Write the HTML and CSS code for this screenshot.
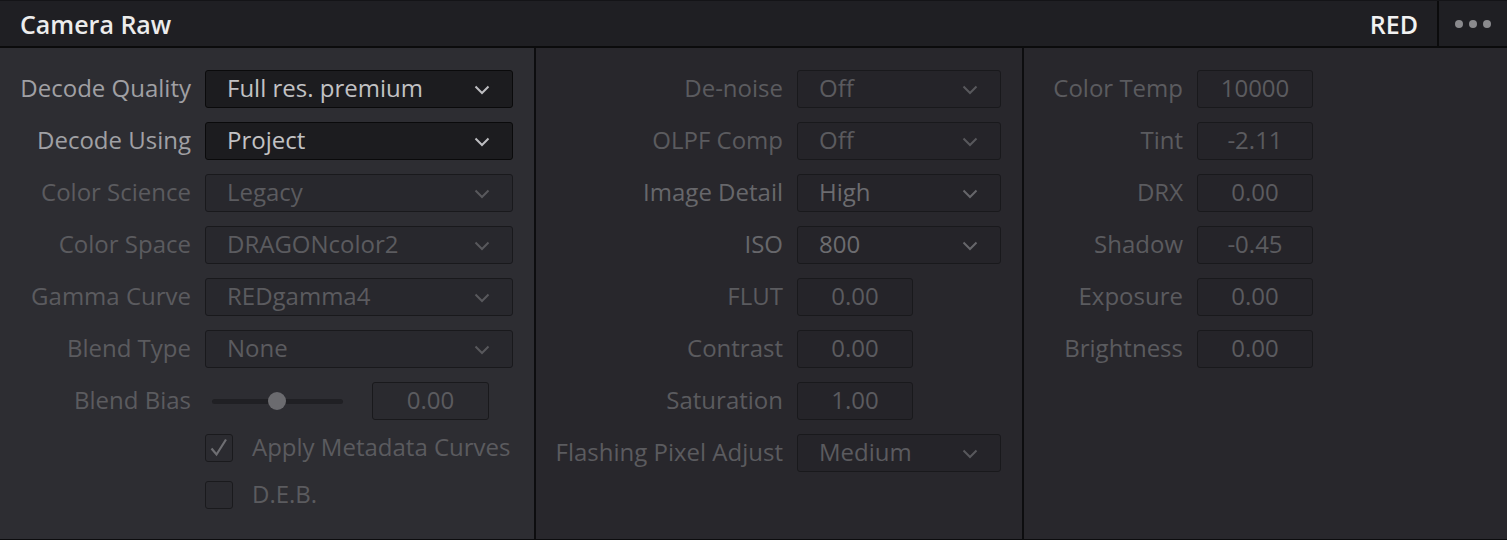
FILE: index.html
```html
<!DOCTYPE html>
<html>
<head>
<meta charset="utf-8">
<link rel="stylesheet" href="styles.css">
</head>
<body>
<div class="panel">
  <header class="header">
    <div class="title">Camera Raw</div>
    <div class="brand">RED</div>
    <div class="more"><span></span><span></span><span></span></div>
  </header>
  <div class="cols">
    <section class="col col-left">
      <div class="grid">
        <div class="lbl on">Decode Quality</div>
        <div class="dd active"><span>Full res. premium</span><svg class="chev" viewBox="0 0 16 10"><path d="M1.5 1.5 L8 8 L14.5 1.5"/></svg></div>
        <div class="lbl on">Decode Using</div>
        <div class="dd active"><span>Project</span><svg class="chev" viewBox="0 0 16 10"><path d="M1.5 1.5 L8 8 L14.5 1.5"/></svg></div>
        <div class="lbl">Color Science</div>
        <div class="dd"><span>Legacy</span><svg class="chev" viewBox="0 0 16 10"><path d="M1.5 1.5 L8 8 L14.5 1.5"/></svg></div>
        <div class="lbl">Color Space</div>
        <div class="dd"><span>DRAGONcolor2</span><svg class="chev" viewBox="0 0 16 10"><path d="M1.5 1.5 L8 8 L14.5 1.5"/></svg></div>
        <div class="lbl">Gamma Curve</div>
        <div class="dd"><span>REDgamma4</span><svg class="chev" viewBox="0 0 16 10"><path d="M1.5 1.5 L8 8 L14.5 1.5"/></svg></div>
        <div class="lbl">Blend Type</div>
        <div class="dd"><span>None</span><svg class="chev" viewBox="0 0 16 10"><path d="M1.5 1.5 L8 8 L14.5 1.5"/></svg></div>
        <div class="lbl">Blend Bias</div>
        <div class="slider-row">
          <div class="slider"><div class="track"></div><div class="thumb"></div></div>
          <div class="num">0.00</div>
        </div>
      </div>
      <div class="checks">
        <label class="chk"><span class="box"><svg viewBox="0 0 26 26"><path d="M5.5 13.5 L10.5 19.5 L20 4.5"/></svg></span><span class="chk-text">Apply Metadata Curves</span></label>
        <label class="chk chk2"><span class="box"></span><span class="chk-text">D.E.B.</span></label>
      </div>
    </section>
    <section class="col col-mid">
      <div class="grid">
        <div class="lbl">De-noise</div>
        <div class="dd"><span>Off</span><svg class="chev" viewBox="0 0 16 10"><path d="M1.5 1.5 L8 8 L14.5 1.5"/></svg></div>
        <div class="lbl">OLPF Comp</div>
        <div class="dd"><span>Off</span><svg class="chev" viewBox="0 0 16 10"><path d="M1.5 1.5 L8 8 L14.5 1.5"/></svg></div>
        <div class="lbl mid">Image Detail</div>
        <div class="dd mid"><span>High</span><svg class="chev" viewBox="0 0 16 10"><path d="M1.5 1.5 L8 8 L14.5 1.5"/></svg></div>
        <div class="lbl mid">ISO</div>
        <div class="dd mid"><span>800</span><svg class="chev" viewBox="0 0 16 10"><path d="M1.5 1.5 L8 8 L14.5 1.5"/></svg></div>
        <div class="lbl">FLUT</div>
        <div><div class="num">0.00</div></div>
        <div class="lbl">Contrast</div>
        <div><div class="num">0.00</div></div>
        <div class="lbl">Saturation</div>
        <div><div class="num">1.00</div></div>
        <div class="lbl">Flashing Pixel Adjust</div>
        <div class="dd"><span>Medium</span><svg class="chev" viewBox="0 0 16 10"><path d="M1.5 1.5 L8 8 L14.5 1.5"/></svg></div>
      </div>
    </section>
    <section class="col col-right">
      <div class="grid">
        <div class="lbl">Color Temp</div>
        <div><div class="num">10000</div></div>
        <div class="lbl">Tint</div>
        <div><div class="num">-2.11</div></div>
        <div class="lbl">DRX</div>
        <div><div class="num">0.00</div></div>
        <div class="lbl">Shadow</div>
        <div><div class="num">-0.45</div></div>
        <div class="lbl">Exposure</div>
        <div><div class="num">0.00</div></div>
        <div class="lbl">Brightness</div>
        <div><div class="num">0.00</div></div>
      </div>
    </section>
  </div>
</div>
</body>
</html>
```
FILE: styles.css
```css
* { box-sizing: border-box; }
html, body {
  margin: 0;
  padding: 0;
  background: #28272c;
}
body {
  font-family: "Open Sans", "Noto Sans", sans-serif;
  width: 1507px;
  height: 540px;
  overflow: hidden;
}
.panel {
  width: 1507px;
  height: 540px;
  display: flex;
  flex-direction: column;
  border-bottom: 1px solid #0c0c0e;
}
.header {
  height: 48px;
  flex: none;
  background: #1f1f23;
  border-top: 1px solid #141417;
  border-bottom: 2px solid #0b0b0c;
  display: flex;
  align-items: center;
}
.title {
  flex: 1;
  padding-left: 20px;
  color: #ececec;
  font-size: 25px;
  font-weight: 600;
}
.brand {
  color: #f2f2f2;
  font-size: 25px;
  font-weight: 600;
  padding-right: 19px;
}
.more {
  align-self: stretch;
  width: 70px;
  border-left: 2px solid #0b0b0c;
  display: flex;
  align-items: center;
  justify-content: center;
  gap: 6px;
}
.more span {
  width: 8px;
  height: 8px;
  border-radius: 50%;
  background: #8a8a8d;
}
.cols {
  flex: 1;
  display: flex;
}
.col {
  padding-top: 22px;
}
.col-left {
  width: 536px;
  background: #2d2d32;
  border-right: 2px solid #0d0d0f;
}
.col-mid {
  width: 488px;
  background: #28272c;
  border-right: 2px solid #0d0d0f;
}
.col-right {
  flex: 1;
  background: #28272c;
}
.grid {
  display: grid;
  grid-auto-rows: 38px;
  row-gap: 14px;
  column-gap: 14px;
  align-items: center;
}
.col-left .grid { grid-template-columns: 191px 308px; }
.col-mid .grid { grid-template-columns: 247px 204px; }
.col-right .grid { grid-template-columns: 159px 116px; }
.lbl {
  text-align: right;
  font-size: 24px;
  line-height: 32px;
  padding-bottom: 3px;
  color: #5b5b5f;
  white-space: nowrap;
}
.lbl.on { color: #a0a0a4; }
.lbl.mid { color: #67676b; }
.dd {
  height: 38px;
  border: 1px solid #19191c;
  border-radius: 3px;
  background: #28282d;
  display: flex;
  align-items: center;
  justify-content: space-between;
  padding: 0 22px 0 21px;
  font-size: 24px;
  line-height: 32px;
  color: #5b5b5f;
}
.dd span { padding-bottom: 3px; }
.col-mid .dd { background: #252429; }
.dd.active {
  background: #1c1c1f;
  border-color: #0a0a0b;
  color: #c2c2c4;
}
.dd.mid { color: #6c6c70; }
.chev {
  width: 16px;
  height: 10px;
  flex: none;
  margin-top: 1px;
}
.chev path {
  fill: none;
  stroke: #58585c;
  stroke-width: 2;
}
.dd.active .chev path { stroke: #bdbdc0; }
.dd.mid .chev path { stroke: #66666a; }
.num {
  width: 116px;
  height: 38px;
  border: 1px solid #19191c;
  border-radius: 3px;
  background: #252429;
  display: flex;
  align-items: center;
  justify-content: center;
  font-size: 24px;
  line-height: 32px;
  padding-bottom: 2px;
  color: #5b5b5f;
}
.slider-row {
  display: flex;
  align-items: center;
}
.slider {
  position: relative;
  margin-left: 7px;
  width: 131px;
  height: 18px;
  display: flex;
  align-items: center;
}
.track {
  width: 100%;
  height: 5px;
  border-radius: 3px;
  background: #202024;
}
.thumb {
  position: absolute;
  left: 56px;
  top: 0;
  width: 18px;
  height: 18px;
  border-radius: 50%;
  background: #6b6b6f;
}
.slider-row .num {
  margin-left: 29px;
  width: 117px;
  background: #2a2a2f;
}
.checks {
  margin-top: 14px;
  padding-left: 205px;
  display: flex;
  flex-direction: column;
  gap: 19px;
}
.chk {
  display: flex;
  align-items: center;
  height: 28px;
}
.box {
  width: 28px;
  height: 28px;
  border: 1px solid #1a1a1d;
  border-radius: 3px;
  background: #2b2b30;
  flex: none;
}
.box svg {
  width: 26px;
  height: 26px;
  display: block;
}
.box svg path {
  fill: none;
  stroke: #6e6e72;
  stroke-width: 2.2;
}
.chk-text {
  margin-left: 19px;
  font-size: 24px;
  line-height: 32px;
  padding-bottom: 3px;
  color: #5b5b5f;
}
```
